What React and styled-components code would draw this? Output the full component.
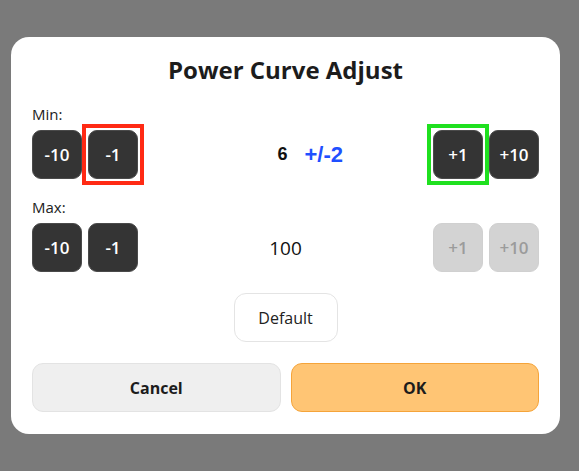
import styled, { createGlobalStyle } from "styled-components";

const GlobalStyle = createGlobalStyle`
  html, body {
    margin: 0;
    padding: 0;
    background: #7a7a7a;
  }
  body {
    font-family: "Open Sans", "Noto Sans", sans-serif;
  }
`;

const Backdrop = styled.div`
  width: 579px;
  height: 471px;
  background: #7a7a7a;
  padding: 37px 0 0 11px;
  box-sizing: border-box;
`;

const Dialog = styled.div`
  width: 549px;
  height: 397px;
  box-sizing: border-box;
  background: #fff;
  border-radius: 18px;
  padding: 18px 21px 21px;
  display: flex;
  flex-direction: column;
`;

const Title = styled.h2`
  margin: 0;
  text-align: center;
  font-size: 24px;
  line-height: 30px;
  font-weight: 700;
  color: #1c1c1c;
`;

const Section = styled.div`
  display: flex;
  flex-direction: column;
  gap: 6px;
  margin-top: ${(p) => p.$top}px;
`;

const Label = styled.div`
  font-size: 15px;
  line-height: 19px;
  color: #222;
`;

const Row = styled.div`
  display: grid;
  grid-template-columns: auto 1fr auto;
  align-items: center;
`;

const Group = styled.div`
  display: flex;
  gap: 6px;
`;

const StepButton = styled.button`
  position: relative;
  width: 50px;
  height: 49px;
  border-radius: 9px;
  border: 1px solid ${(p) => (p.disabled ? "#d0d0d0" : "#4a4a4a")};
  background: ${(p) => (p.disabled ? "#d3d3d3" : "#343434")};
  color: ${(p) => (p.disabled ? "#9b9b9b" : "#fff")};
  font-family: inherit;
  font-size: 17px;
  font-weight: 600;
  padding: 0;

  &::after {
    content: ${(p) => (p.$mark ? '""' : "none")};
    position: absolute;
    inset: -7px;
    border: 4px solid ${(p) => p.$mark};
  }
`;

const Middle = styled.div`
  display: flex;
  justify-content: center;
  padding-right: ${(p) => (p.$nudge ? 6 : 0)}px;
`;

const Value = styled.span`
  position: relative;
  font-family: ${(p) => (p.$strong ? '"Liberation Sans", Arial, sans-serif' : "inherit")};
  font-size: ${(p) => (p.$strong ? 18 : 19)}px;
  font-weight: ${(p) => (p.$strong ? 700 : 500)};
  color: #111;
`;

const Spread = styled.span`
  position: absolute;
  left: calc(100% + 17px);
  top: 50%;
  transform: translateY(-50%);
  white-space: nowrap;
  font-family: "Liberation Sans", Arial, sans-serif;
  font-size: 22px;
  font-weight: 700;
  color: #1f50ff;
`;

const DefaultRow = styled.div`
  display: flex;
  justify-content: center;
  margin-top: 21px;
`;

const DefaultButton = styled.button`
  width: 104px;
  height: 49px;
  border-radius: 12px;
  border: 1px solid #e4e4e4;
  background: #fff;
  color: #222;
  font-family: inherit;
  font-size: 16px;
  font-weight: 500;
`;

const Actions = styled.div`
  display: grid;
  grid-template-columns: 1fr 1fr;
  gap: 10px;
  margin-top: 21px;
`;

const ActionButton = styled.button`
  height: 49px;
  border-radius: 11px;
  border: 1px solid ${(p) => (p.$primary ? "#f5a43a" : "#e3e3e3")};
  background: ${(p) => (p.$primary ? "#ffc574" : "#efefef")};
  color: #1c1c1c;
  font-family: inherit;
  font-size: 16px;
  font-weight: 700;
`;

const AdjustRow = ({ label, value, spread, top, marks = {}, maxed }) => (
  <Section $top={top}>
    <Label>{label}</Label>
    <Row>
      <Group>
        <StepButton>-10</StepButton>
        <StepButton $mark={marks.minus}>-1</StepButton>
      </Group>
      <Middle $nudge={!!spread}>
        <Value $strong={!!spread}>
          {value}
          {spread && <Spread>{spread}</Spread>}
        </Value>
      </Middle>
      <Group>
        <StepButton $mark={marks.plus} disabled={maxed}>+1</StepButton>
        <StepButton disabled={maxed}>+10</StepButton>
      </Group>
    </Row>
  </Section>
);

export default function App() {
  return (
    <>
      <GlobalStyle />
      <Backdrop>
        <Dialog>
          <Title>Power Curve Adjust</Title>
          <AdjustRow
            label="Min:"
            value="6"
            spread="+/-2"
            top={20}
            marks={{ minus: "#ff2a14", plus: "#1fe01f" }}
          />
          <AdjustRow label="Max:" value="100" top={19} maxed />
          <DefaultRow>
            <DefaultButton>Default</DefaultButton>
          </DefaultRow>
          <Actions>
            <ActionButton>Cancel</ActionButton>
            <ActionButton $primary>OK</ActionButton>
          </Actions>
        </Dialog>
      </Backdrop>
    </>
  );
}
